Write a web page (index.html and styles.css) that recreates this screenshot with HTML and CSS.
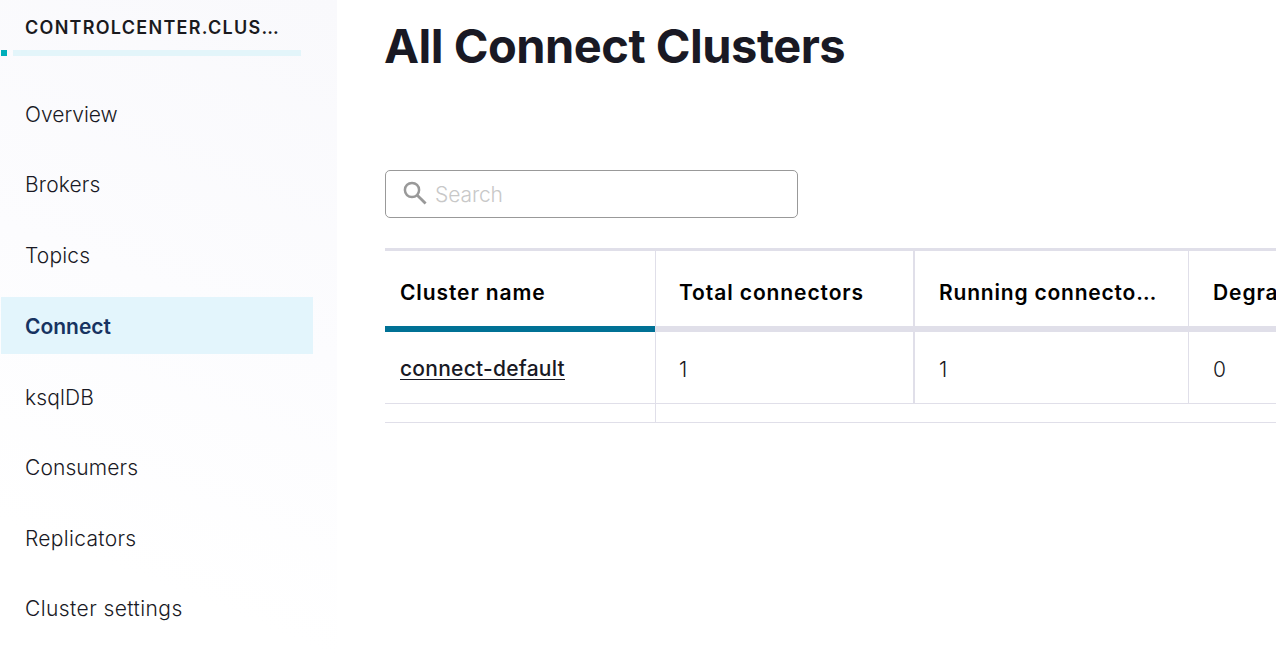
FILE: index.html
```html
<!DOCTYPE html>
<html lang="en">
<head>
<meta charset="utf-8">
<title>All Connect Clusters</title>
<link rel="stylesheet" href="styles.css">
</head>
<body>
<div class="app">
  <aside class="sidebar">
    <div class="cluster-name"><span>CONTROLCENTER.CLUS…</span></div>
    <div class="divider"><i class="divider-dot"></i><i class="divider-line"></i></div>
    <nav class="nav">
      <a class="nav-item"><span class="t-overview">Overview</span></a>
      <a class="nav-item"><span class="t-brokers">Brokers</span></a>
      <a class="nav-item"><span class="t-topics">Topics</span></a>
      <a class="nav-item active"><span class="t-connect">Connect</span></a>
      <a class="nav-item"><span class="t-ksql">ksqlDB</span></a>
      <a class="nav-item"><span class="t-consumers">Consumers</span></a>
      <a class="nav-item"><span class="t-replicators">Replicators</span></a>
      <a class="nav-item"><span class="t-settings">Cluster settings</span></a>
    </nav>
  </aside>
  <main class="main">
    <h1 class="title">All Connect Clusters</h1>
    <div class="search">
      <svg class="search-icon" width="24" height="24" viewBox="0 0 24 24" fill="none" stroke="#999" stroke-width="2.5"><circle cx="9" cy="9" r="7.1"/><path d="M14 14l8.6 8.6" stroke-width="2.8"/></svg>
      <span class="placeholder">Search</span>
    </div>
    <div class="table">
      <div class="row head">
        <div class="cell sorted">Cluster name</div>
        <div class="cell total">Total connectors</div>
        <div class="cell wide">Running connecto…</div>
        <div class="cell">Degraded connectors</div>
      </div>
      <div class="row body">
        <div class="cell"><a class="link">connect-default</a></div>
        <div class="cell total">1</div>
        <div class="cell wide">1</div>
        <div class="cell">0</div>
      </div>
      <div class="row foot"><div class="cell"></div><div class="cell"></div></div>
    </div>
  </main>
</div>
</body>
</html>
```
FILE: styles.css
```css
* { box-sizing: border-box; }
body { margin: 0; background: #fff; font-family: Inter, "Liberation Sans", sans-serif; color: #191924; overflow: hidden; }
.app { display: flex; width: 1276px; height: 665px; overflow: hidden; }
.sidebar { flex: none; width: 337px; height: 665px; background: linear-gradient(202deg, #f9f9fc 0%, #fcfcfe 45%, #fff 82%); }
.cluster-name { height: 50px; padding: 15px 0 0 25px; font-size: 18px; line-height: 26px; font-weight: 600; letter-spacing: 1.27px; white-space: nowrap; color: #1a1a1e; }
.divider { display: flex; gap: 6px; height: 6px; padding-left: 1px; }
.divider-dot { width: 6px; background: #00afba; }
.divider-line { width: 288px; background: #e3f5fa; }
.nav { display: flex; flex-direction: column; gap: 13.7px; padding: 29px 0 0 1px; }
.nav-item { display: flex; align-items: center; flex: none; width: 312px; height: 57px; padding: 1px 0 0 24px; font-size: 21px; font-weight: 300; white-space: nowrap; }
.nav-item.active { padding-top: 2px; background: #e3f5fc; color: #173361; font-weight: 600; }
.t-overview { letter-spacing: 0; }
.t-brokers, .t-topics, .t-ksql { letter-spacing: .15px; }
.t-ksql { padding-top: 2px; }
.t-connect { letter-spacing: 0; }
.t-consumers { letter-spacing: .1px; }
.t-replicators { letter-spacing: .3px; }
.t-settings { letter-spacing: .42px; }
.main { flex: 1; min-width: 0; padding-left: 48px; overflow: hidden; }
.title { margin: 0 0 0 -1px; padding-top: 16px; height: 170px; font-size: 47px; line-height: 60px; font-weight: 700; letter-spacing: -.5px; white-space: nowrap; }
.search { display: flex; align-items: center; gap: 8px; width: 413px; height: 48px; padding-left: 17px; border: 1px solid #999; border-radius: 5px; }
.search-icon { flex: none; margin-bottom: 2px; }
.placeholder { padding-top: 1px; font-size: 21px; font-weight: 300; letter-spacing: -.1px; color: #c8c8c8; }
.table { width: 1074px; margin-top: 30px; border-top: 3px solid #e0dfe9; }
.row { display: grid; grid-template-columns: 270px 259px 274px 271px; }
.cell { display: flex; align-items: center; padding-left: 24px; border-left: 1px solid #e0dfe9; white-space: nowrap; font-size: 21px; }
.cell:first-child { padding-left: 15px; border-left: 0; }
.cell.wide { border-left-width: 2px; margin-left: -1px; }
.head .cell { height: 81px; padding-top: 7px; border-bottom: 6px solid #e0dfe9; color: #000; font-weight: 600; letter-spacing: .9px; }
.head .sorted { border-bottom-color: #007195; }
.head .cell:not(.sorted) { border-left: 0; border-bottom: 0; padding-left: 25px; background: linear-gradient(#e0dfe9, #e0dfe9) 0 0 / 1px 100% no-repeat, linear-gradient(#e0dfe9, #e0dfe9) 0 100% / 100% 6px no-repeat; padding-bottom: 6px; }
.head .cell.wide:not(.sorted) { padding-left: 26px; letter-spacing: .8px; background-size: 2px 100%, 100% 6px; }
.head .cell.total:not(.sorted) { padding-left: 24px; }
.body .cell { height: 72px; padding-top: 3px; border-bottom: 1px solid #e0dfe9; font-weight: 300; }
.body .cell.total { padding-left: 23px; }
.link { line-height: 21px; border-bottom: 1px solid #191924; font-weight: 500; letter-spacing: .25px; }
.foot .cell { height: 19px; border-bottom: 1px solid #e0dfe9; }
.foot .cell:last-child { grid-column: 2 / -1; }
```
